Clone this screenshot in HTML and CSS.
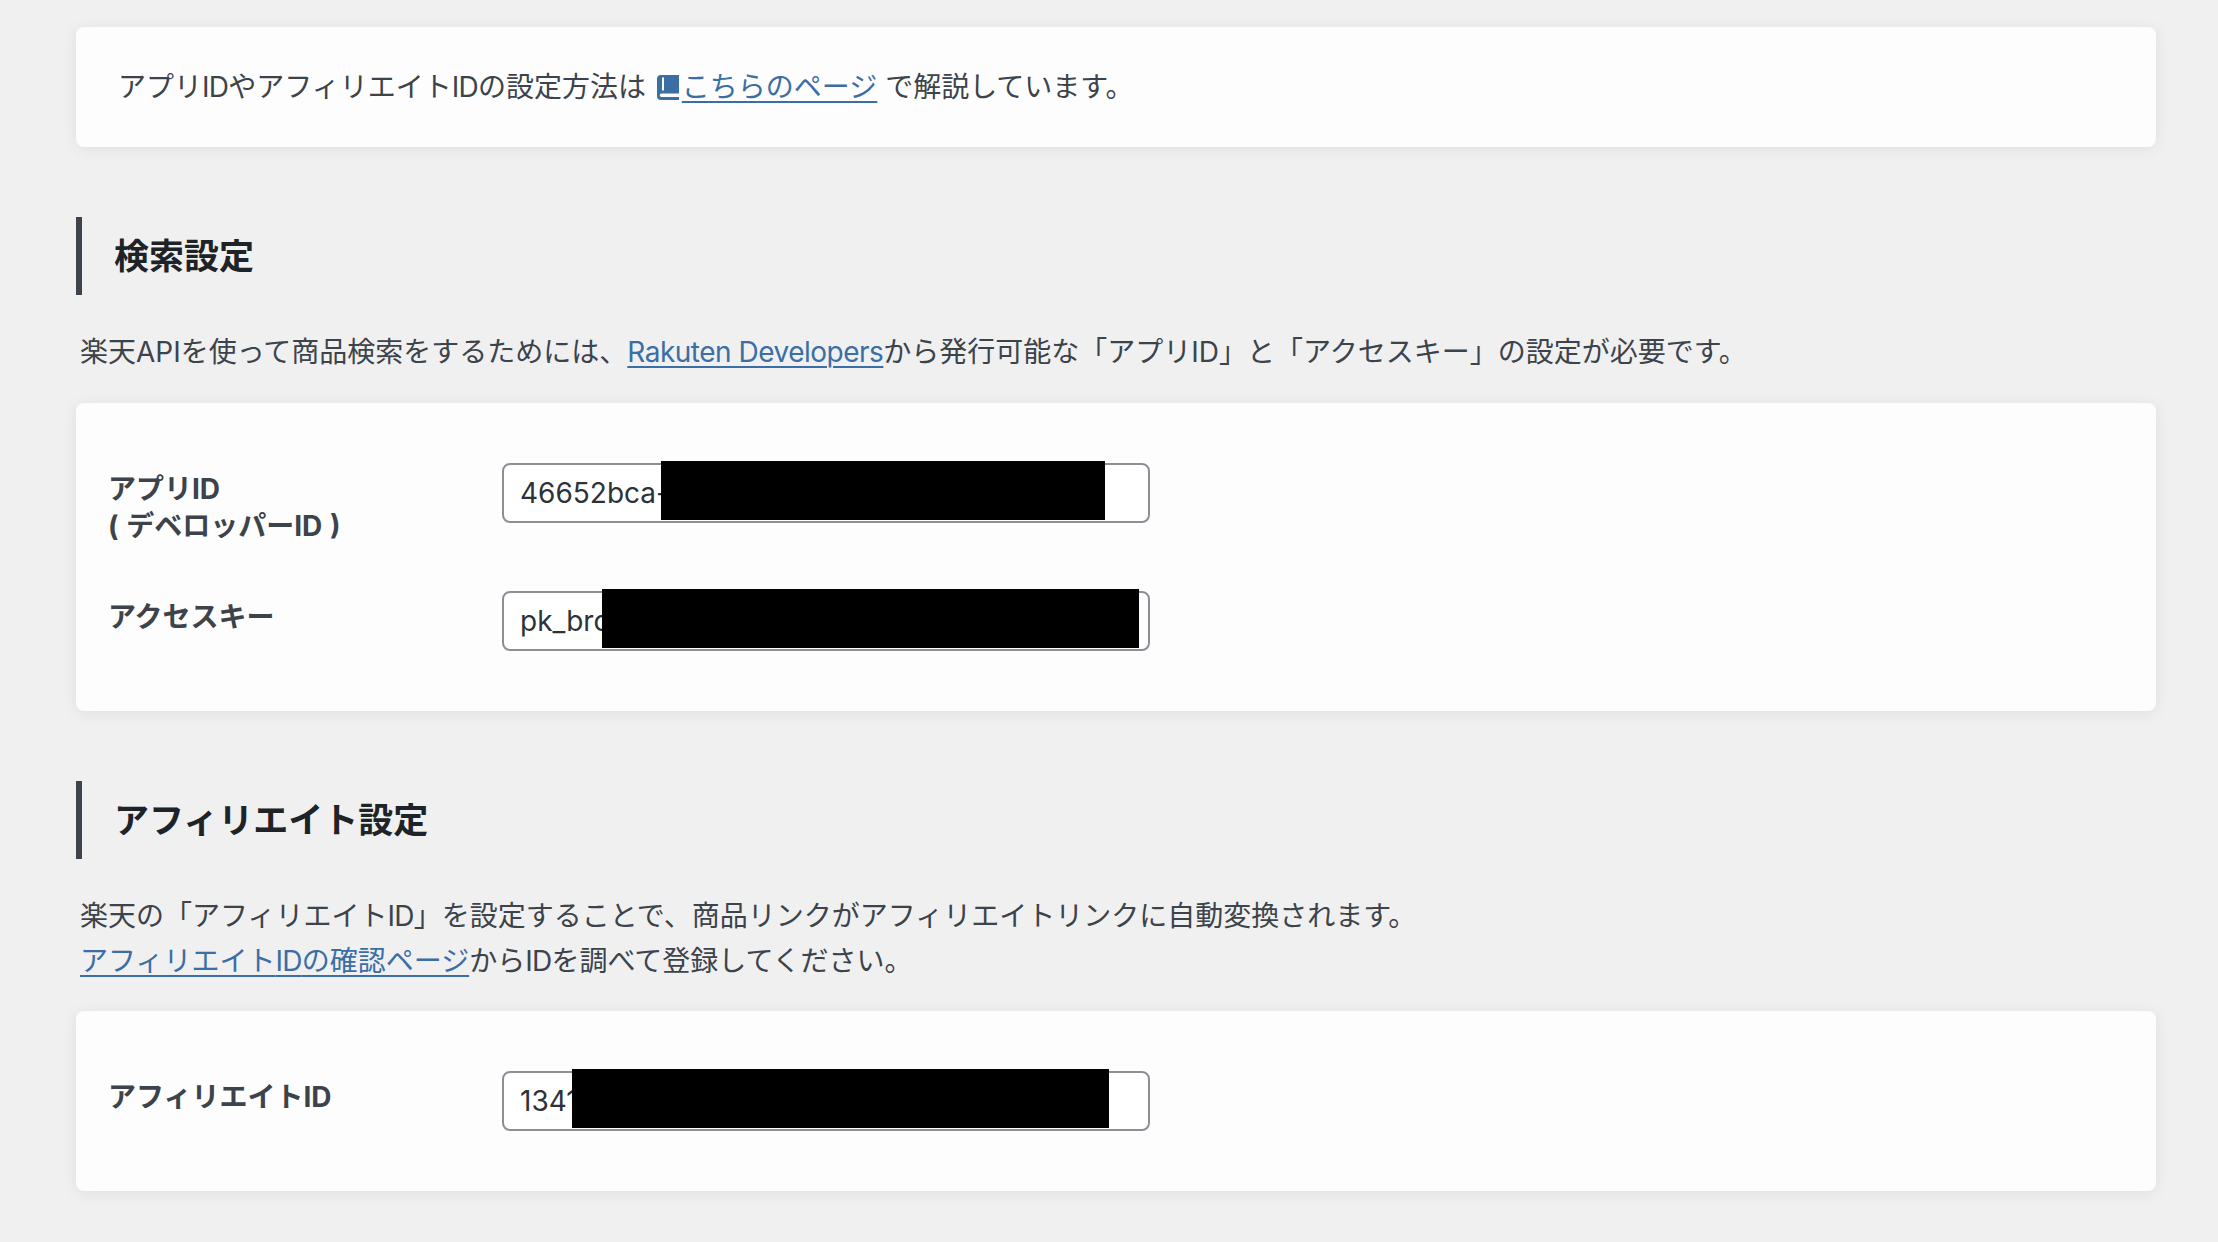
FILE: index.html
```html
<!DOCTYPE html>
<html lang="ja">
<head>
<meta charset="utf-8">
<title>楽天設定</title>
<link rel="stylesheet" href="styles.css">
</head>
<body>
<main class="page">
  <section class="card notice">
    <p>アプリ<span class="abbr">ID</span>やアフィリエイト<span class="abbr">ID</span>の設定方法は <a href="#" class="book-link"><svg class="book" viewBox="0 0 22 25" aria-hidden="true"><path fill-rule="evenodd" d="M4 0H22V25H4A4 4 0 0 1 0 21V4A4 4 0 0 1 4 0ZM5 2.5V15.5H7V2.5ZM4.5 18.5A1.75 1.75 0 0 0 4.5 22H22V18.5Z"/></svg></a><a href="#" class="link">こちらのページ</a> で解説しています。</p>
  </section>

  <h2 class="heading">検索設定</h2>
  <p class="lead">楽天APIを使って商品検索をするためには、<a href="#" class="link latin">Rakuten Developers</a>から発行可能な「アプリID」と「アクセスキー」の設定が必要です。</p>
  <section class="card form">
    <div class="row">
      <label class="label">アプリID<br>( デベロッパーID )</label>
      <div class="field"><input class="input" type="text" value="46652bca-"><span class="mask mask-a"></span></div>
    </div>
    <div class="row">
      <label class="label">アクセスキー</label>
      <div class="field"><input class="input" type="text" value="pk_bro"><span class="mask mask-b"></span></div>
    </div>
  </section>

  <h2 class="heading">アフィリエイト設定</h2>
  <p class="lead lead-tight">楽天の「アフィリエイト<span class="abbr">ID</span>」を設定することで、商品リンクがアフィリエイトリンクに自動変換されます。<br><a href="#" class="link">アフィリエイト<span class="abbr">ID</span>の確認ページ</a>から<span class="abbr">ID</span>を調べて登録してください。</p>
  <section class="card form">
    <div class="row">
      <label class="label">アフィリエイトID</label>
      <div class="field"><input class="input" type="text" value="1341"><span class="mask mask-c"></span></div>
    </div>
  </section>
</main>
</body>
</html>
```

FILE: styles.css
```css
* { box-sizing: border-box; }
html, body { margin: 0; height: 100%; overflow: hidden; }
body {
  background: #f0f0f1;
  color: #3c434a;
  font-family: Inter, "Noto Sans CJK JP", sans-serif;
  font-size: 28px;
  line-height: 45px;
}
.page { padding: 27px 62px 0 76px; }
p { margin: 0; }
.abbr { letter-spacing: -.75px; }
.latin { letter-spacing: -.5px; }
.card {
  background: #fdfdfd;
  border-radius: 8px;
  box-shadow: 0 2px 16px rgba(0, 0, 0, .07);
}
.notice { height: 120px; padding: 38px 42px 0; margin-bottom: 70px; }
.book { width: 22px; height: 25px; fill: #3a6ea5; vertical-align: -3px; }
.book-link { margin: 0 3px; text-decoration: none; }
.link { color: #3a6ea5; text-decoration: underline; text-underline-offset: 4px; text-decoration-thickness: 2px; }
.heading {
  margin: 0;
  height: 78px;
  padding-left: 32px;
  border-left: 6px solid #3c434a;
  color: #1d2327;
  font-size: 35px;
  font-weight: 700;
  line-height: 78px;
}
.lead { margin: 35px 0 28px; padding-left: 4px; }
.lead-tight { margin-bottom: 27px; }
.form { padding: 60px 32px 60px; margin-bottom: 70px; display: flex; flex-direction: column; gap: 46px; }
.row { display: grid; grid-template-columns: 394px 648px; }
.label { font-weight: 700; line-height: 37px; padding-top: 8px; word-spacing: 1px; }
.field { position: relative; height: 60px; }
.input {
  display: block;
  width: 100%;
  height: 60px;
  padding: 0 16px;
  border: 2px solid #8c8f94;
  border-radius: 8px;
  background: #fff;
  color: #2c3338;
  font: 400 28px Inter, sans-serif;
}
.mask { position: absolute; background: #000; top: -2px; height: 59px; }
.mask-a { left: 159px; width: 444px; }
.mask-b { left: 100px; width: 537px; }
.mask-c { left: 70px; width: 537px; }
```
